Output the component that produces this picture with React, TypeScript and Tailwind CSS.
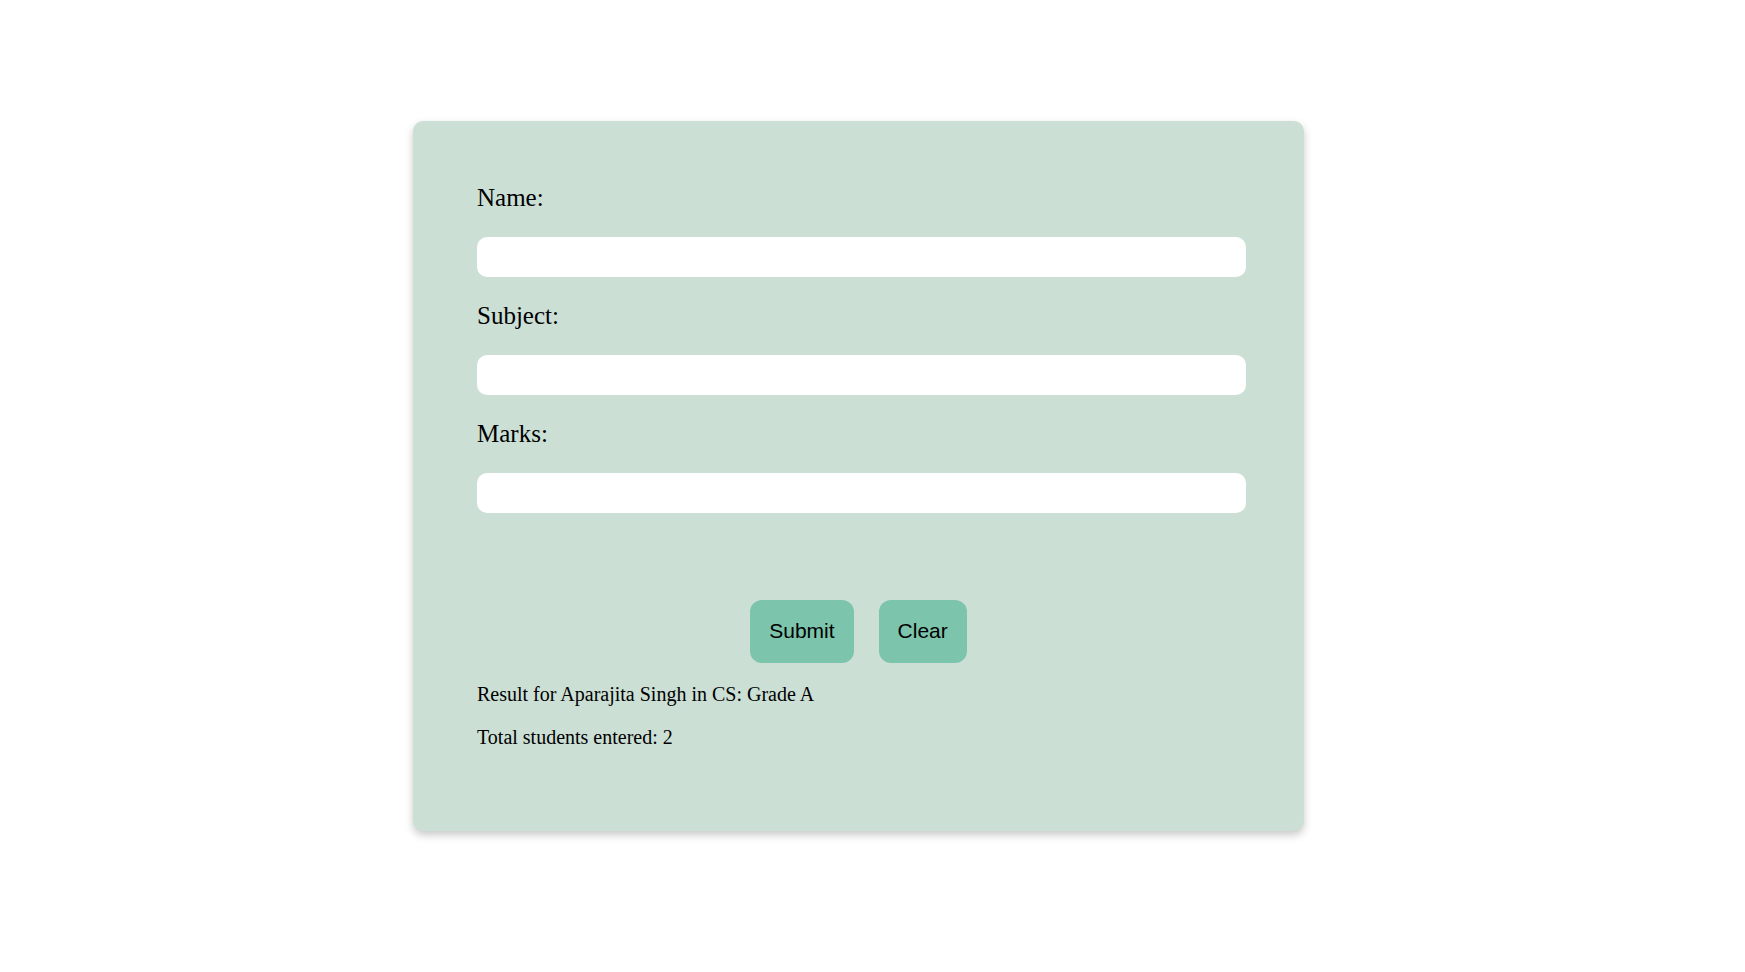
import React from "react";

export default function App() {
  const serif = { fontFamily: '"Liberation Serif", "Times New Roman", serif' };
  return (
    <div className="min-h-[972px] w-full bg-white" style={serif}>
      <div className="pt-[121px] pl-[413px]">
        <div className="w-[891px] rounded-[10px] bg-[#cbdfd5] px-[64px] pt-[62px] pb-[82px] shadow-[0_4px_8px_rgba(0,0,0,0.22)] font-['Liberation_Serif',serif] text-black">
          <label className="block text-[25px] leading-[29px] mb-[25px]">Name:</label>
          <input className="block h-[40px] w-[calc(100%+6px)] rounded-[10px] bg-white border-0 outline-none mb-[24px]" />
          <label className="block text-[25px] leading-[29px] mb-[25px]">Subject:</label>
          <input className="block h-[40px] w-[calc(100%+6px)] rounded-[10px] bg-white border-0 outline-none mb-[24px]" />
          <label className="block text-[25px] leading-[29px] mb-[25px]">Marks:</label>
          <input className="block h-[40px] w-[calc(100%+6px)] rounded-[10px] bg-white border-0 outline-none" />
          <div className="mt-[87px] flex justify-center gap-[25px]">
            <button className="flex h-[63px] items-center rounded-[12px] bg-[#7dc4ac] px-[19px] pb-[1px] text-[21px] leading-[24px] text-black font-['Liberation_Sans',Arial,sans-serif]">
              Submit
            </button>
            <button className="flex h-[63px] items-center rounded-[12px] bg-[#7dc4ac] px-[19px] pb-[1px] text-[21px] leading-[24px] text-black font-['Liberation_Sans',Arial,sans-serif]">
              Clear
            </button>
          </div>
          <p className="mt-[20px] text-[20px] leading-[23px]">Result for Aparajita Singh in CS: Grade A</p>
          <p className="mt-[20px] text-[20px] leading-[23px]">Total students entered: 2</p>
        </div>
      </div>
    </div>
  );
}
